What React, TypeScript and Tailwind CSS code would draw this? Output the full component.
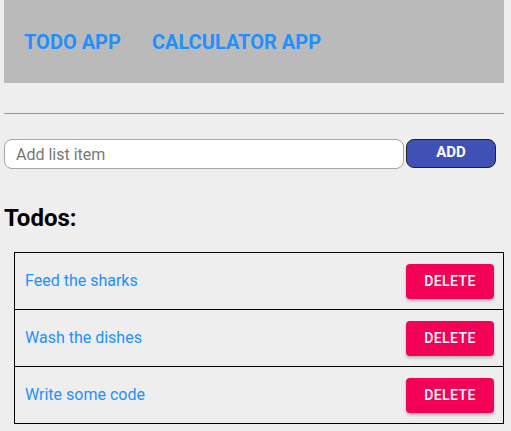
import { useState } from "react";

const initialTodos = ["Feed the sharks", "Wash the dishes", "Write some code"];

export default function App() {
  const [todos, setTodos] = useState(initialTodos);
  const [text, setText] = useState("");

  const addTodo = () => {
    if (!text.trim()) return;
    setTodos([...todos, text.trim()]);
    setText("");
  };

  return (
    <div className="min-h-screen bg-[#eeeeee] font-['Roboto',sans-serif]">
      <div className="ml-1 w-[500px]">
        <nav className="h-[83px] bg-[#bababa] flex items-center gap-[31px] pl-5">
          <a href="#" className="text-[20px] font-bold text-[#1e90ff] leading-none">
            TODO APP
          </a>
          <a href="#" className="text-[20px] font-bold text-[#1e90ff] leading-none">
            CALCULATOR APP
          </a>
        </nav>

        <hr className="mt-[30px] border-t border-[#999999]" />

        <div className="mt-[25px] flex items-start gap-[2px]">
          <input
            value={text}
            onChange={(e) => setText(e.target.value)}
            placeholder="Add list item"
            className="w-[400px] h-[30px] rounded-[8px] border border-[#a6a6a6] bg-white px-[11px] text-[16px] text-black placeholder:text-[#777777] outline-none"
          />
          <button
            onClick={addTodo}
            className="w-[90px] h-[29px] rounded-[8px] border border-[#222222] bg-[#3f51b5] text-white text-[15px] font-bold leading-none pb-[3px]"
          >
            ADD
          </button>
        </div>

        <h2 className="mt-[37px] text-[24px] font-bold text-black leading-none">Todos:</h2>

        <ul className="mt-[22px] ml-[10px] w-[490px] border-x border-t border-black">
          {todos.map((todo, i) => (
            <li
              key={i}
              className="h-[57px] flex items-center justify-between pl-[10px] pr-[9px] border-b border-black"
            >
              <span className="text-[16px] text-[#1e90ff]">{todo}</span>
              <button
                onClick={() => setTodos(todos.filter((_, j) => j !== i))}
                className="w-[88px] h-[35px] rounded-[4px] bg-[#f50057] text-white text-[14px] font-medium tracking-[0.4px] shadow-[0_2px_3px_rgba(0,0,0,0.25)]"
              >
                DELETE
              </button>
            </li>
          ))}
        </ul>
      </div>
    </div>
  );
}
